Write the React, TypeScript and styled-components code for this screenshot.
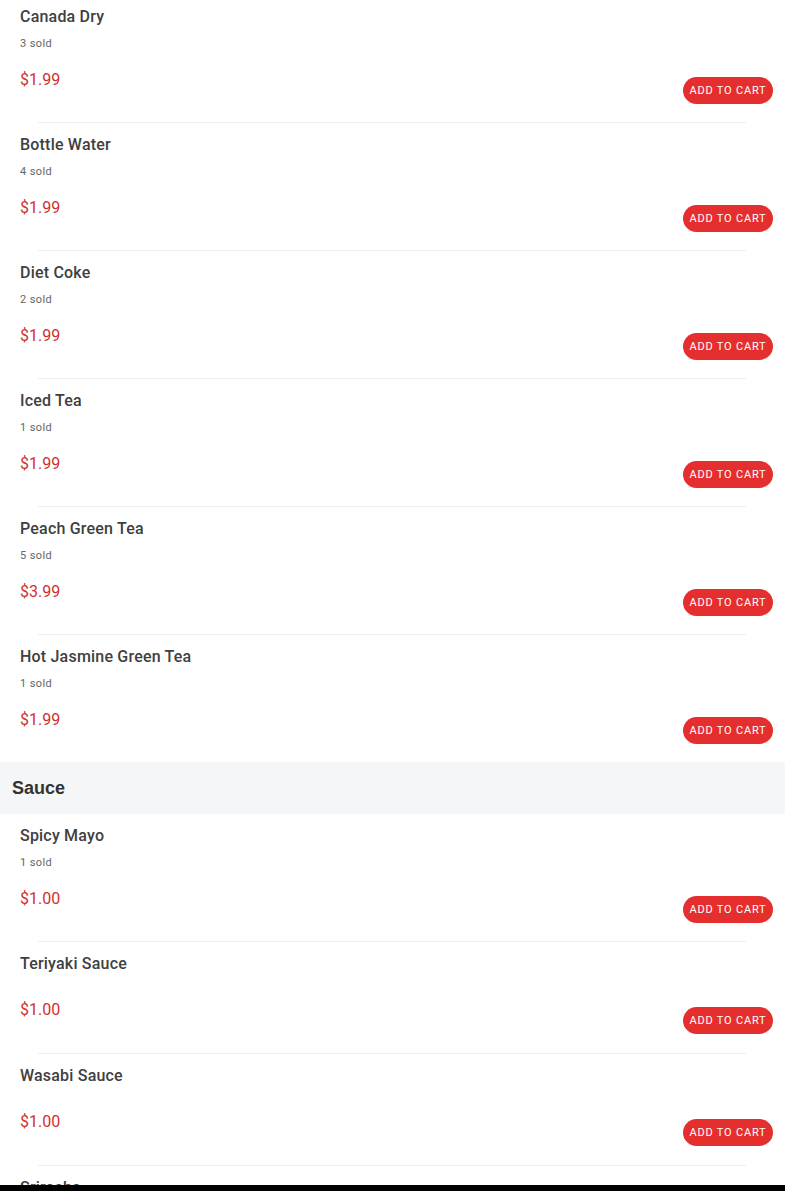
import React from "react";
import styled, { createGlobalStyle } from "styled-components";

type Item = { name: string; sold?: number; price: string };
type Section = { title?: string; items: Item[] };

const sections: Section[] = [
  {
    items: [
      { name: "Canada Dry", sold: 3, price: "$1.99" },
      { name: "Bottle Water", sold: 4, price: "$1.99" },
      { name: "Diet Coke", sold: 2, price: "$1.99" },
      { name: "Iced Tea", sold: 1, price: "$1.99" },
      { name: "Peach Green Tea", sold: 5, price: "$3.99" },
      { name: "Hot Jasmine Green Tea", sold: 1, price: "$1.99" },
    ],
  },
  {
    title: "Sauce",
    items: [
      { name: "Spicy Mayo", sold: 1, price: "$1.00" },
      { name: "Teriyaki Sauce", price: "$1.00" },
      { name: "Wasabi Sauce", price: "$1.00" },
      { name: "Sriracha", price: "$1.00" },
    ],
  },
];

const GlobalStyle = createGlobalStyle`
  html, body {
    margin: 0;
    padding: 0;
    background: #fff;
    font-family: Roboto, "Liberation Sans", sans-serif;
  }
  body {
    overflow: hidden;
  }
`;

const App: React.FC = () => {
  return (
    <>
      <GlobalStyle />
      <Menu>
        {sections.map((section, si) => (
          <div key={si}>
            {section.title && <SectionHeader>{section.title}</SectionHeader>}
            {section.items.map((item) => {
              const compact = item.sold === undefined;
              return (
                <ItemRow key={item.name}>
                  <ItemInfo $compact={compact}>
                    <ItemName>{item.name}</ItemName>
                    {!compact && <Sold>{item.sold} sold</Sold>}
                    <PriceRow $compact={compact}>
                      <Price>{item.price}</Price>
                      <AddButton type="button">Add to cart</AddButton>
                    </PriceRow>
                  </ItemInfo>
                  <Divider />
                </ItemRow>
              );
            })}
          </div>
        ))}
      </Menu>
      <BottomBar />
    </>
  );
};

const Menu = styled.div`
  display: flex;
  flex-direction: column;
  margin-top: -5px;
`;

const SectionHeader = styled.h2`
  margin: -1px 0 0;
  height: 52px;
  display: flex;
  align-items: center;
  padding: 0 12px;
  background: #f5f6f7;
  font-family: "Liberation Sans", Arial, sans-serif;
  font-size: 18px;
  font-weight: 700;
  color: #333;
`;

const ItemRow = styled.div`
  display: flex;
  flex-direction: column;
`;

const ItemInfo = styled.div<{ $compact: boolean }>`
  display: flex;
  flex-direction: column;
  padding: 10px 12px ${(p) => (p.$compact ? 19 : 18)}px 20px;
`;

const ItemName = styled.div`
  font-size: 16px;
  line-height: 24px;
  font-weight: 500;
  letter-spacing: 0.2px;
  color: #404040;
`;

const Sold = styled.div`
  margin-top: 7px;
  font-size: 11px;
  line-height: 16px;
  letter-spacing: 0.4px;
  color: #666;
`;

const PriceRow = styled.div<{ $compact: boolean }>`
  display: flex;
  justify-content: space-between;
  align-items: flex-start;
  margin-top: ${(p) => (p.$compact ? 24 : 18)}px;
`;

const Price = styled.span`
  font-size: 16px;
  line-height: 20px;
  color: #d32f2f;
`;

const AddButton = styled.button`
  margin-top: 7px;
  height: 27px;
  width: 90px;
  padding: 0;
  border: none;
  border-radius: 14px;
  background: #e52f2f;
  color: #fff;
  font-family: Roboto, "Liberation Sans", sans-serif;
  font-size: 11px;
  font-weight: 400;
  letter-spacing: 0.8px;
  text-transform: uppercase;
  cursor: pointer;
`;

const Divider = styled.div`
  height: 1px;
  margin: 0 39px 0 38px;
  background: #eeeeee;
`;

const BottomBar = styled.div`
  position: fixed;
  left: 0;
  right: 0;
  bottom: 0;
  height: 6px;
  background: #000;
`;

export default App;
